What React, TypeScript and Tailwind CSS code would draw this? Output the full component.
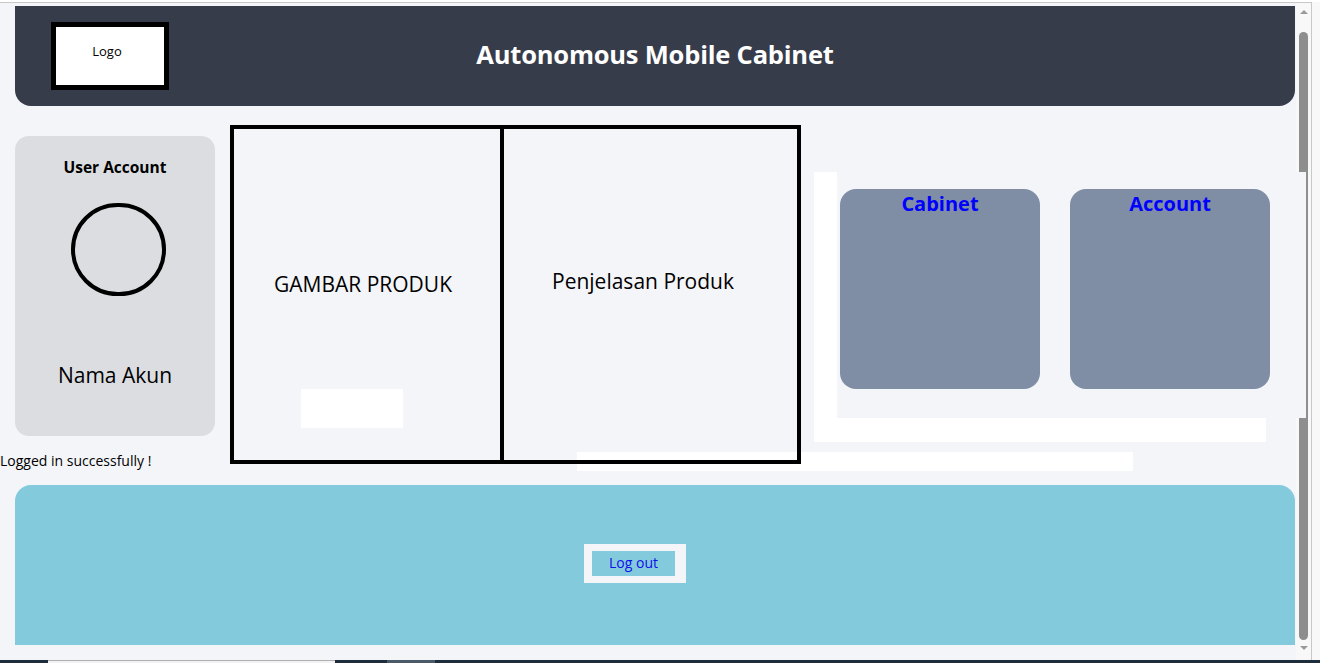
const pageBg = "bg-[#f4f5f9]";

function Scrollbar() {
  return (
    <div className="w-[15px] shrink-0 bg-[#f8f8f8] flex flex-col items-center">
      <div className="mt-[7px] shrink-0 w-0 h-0 border-x-[4px] border-x-transparent border-b-[4px] border-b-[#9a9a9a]" />
      <div className="mt-[18px] shrink-0 w-[9px] h-[608px] rounded-full bg-[#8e8e8e]" />
      <div className="mt-[6px] shrink-0 w-0 h-0 border-x-[4px] border-x-transparent border-t-[4px] border-t-[#9a9a9a]" />
    </div>
  );
}

function Header() {
  return (
    <header className="ml-[15px] w-[1280px] mt-[3px] h-[100px] shrink-0 rounded-b-2xl bg-[#373c4b] grid grid-cols-[1fr_auto_1fr] items-center">
      <div className="pl-[36px]">
        <div className="w-[118px] h-[68px] border-[5px] border-black bg-white flex items-center justify-center pb-[8px] pr-[6px] text-[13px] text-black">
          Logo
        </div>
      </div>
      <h1 className="pb-[3px] text-[25.5px] font-bold text-white tracking-[-0.2px]">Autonomous Mobile Cabinet</h1>
      <div />
    </header>
  );
}

function UserCard() {
  return (
    <div className="ml-[15px] mt-[30px] w-[200px] h-[300px] rounded-[14px] bg-[#dcdde1] flex flex-col items-center">
      <h2 className="mt-[20px] text-[15.5px] font-bold text-black">User Account</h2>
      <div className="mt-[24px] ml-[6px] w-[95px] h-[93px] rounded-full border-[4px] border-black" />
      <p className="mt-[64px] text-[21px] text-black">Nama Akun</p>
    </div>
  );
}

function ProductBox() {
  return (
    <div className="relative z-10 shrink-0 mt-[19px] w-[571px] h-[339px] border-[4px] border-black flex">
      <div className="w-[270px] shrink-0 border-r-[4px] border-black flex flex-col">
        <p className="pt-[140px] pr-[8px] text-center text-[21px] text-black">GAMBAR PRODUK</p>
        <div className="mt-[88px] ml-[67px] w-[102px] h-[39px] bg-white" />
      </div>
      <div className="flex-1">
        <p className="pt-[137px] pr-[15px] text-center text-[21px] text-black">Penjelasan Produk</p>
      </div>
    </div>
  );
}

function MenuCard({ title }: { title: string }) {
  return (
    <div className="w-[200px] h-[200px] shrink-0 rounded-2xl bg-[#7f8ea5] flex justify-center">
      <h3 className="text-[20px] font-bold text-[#0000ff] leading-[30px]">{title}</h3>
    </div>
  );
}

function MenuArea() {
  return (
    <div className="relative shrink-0 ml-[13px] mt-[66px] w-[452px] h-[270px] bg-white">
      <div className={`absolute left-[23px] top-0 -right-[40px] bottom-[24px] ${pageBg}`} />
      <div className="relative flex gap-[30px] pl-[26px] pt-[17px]">
        <MenuCard title="Cabinet" />
        <MenuCard title="Account" />
      </div>
    </div>
  );
}

function Footer() {
  return (
    <footer className="ml-[15px] w-[1280px] h-[160px] shrink-0 rounded-t-2xl bg-[#83cadc] flex items-center justify-center">
      <button className="mr-[40px] mt-[-4px] border-y-[7px] border-l-[8px] border-r-[11px] border-[#f4f5f9] w-[102px] h-[39px] bg-[#83cadc] text-[14px] text-[#1010e8] flex items-center justify-center pb-[1px]">
        Log out
      </button>
    </footer>
  );
}

export default function App() {
  return (
    <div className="w-[1320px] h-[663px] overflow-hidden bg-[#f8f8f8] flex flex-col font-['Open_Sans','Noto_Sans',sans-serif]">
      <div className="h-[2px] shrink-0 bg-white" />
      <div className="h-px shrink-0 w-[1312px] bg-[#c8c8c8]" />
      <div className="flex h-[657px] shrink-0">
        <main className={`w-[1296px] shrink-0 ${pageBg} flex flex-col`}>
          <Header />
          <section className="relative h-[379px] shrink-0 flex items-start">
            <div className="absolute left-[577px] top-[346px] w-[556px] h-[19px] bg-white" />
            <div className="w-[230px] shrink-0 flex flex-col">
              <UserCard />
              <p className="mt-[14px] text-[14px] text-black">Logged in successfully !</p>
            </div>
            <ProductBox />
            <MenuArea />
          </section>
          <Footer />
        </main>
        <Scrollbar />
        <div className="w-px shrink-0 bg-[#c8c8c8]" />
        <div className="flex-1 bg-[#f8f8f8]" />
      </div>
      <div className="h-[3px] shrink-0 flex bg-[#1e2d3b]">
        <div className="ml-[48px] w-[287px] bg-[#f2f2f2] border-t border-[#b0b0b0]" />
        <div className="ml-[52px] w-[48px] bg-[#4a5a66]" />
      </div>
    </div>
  );
}
